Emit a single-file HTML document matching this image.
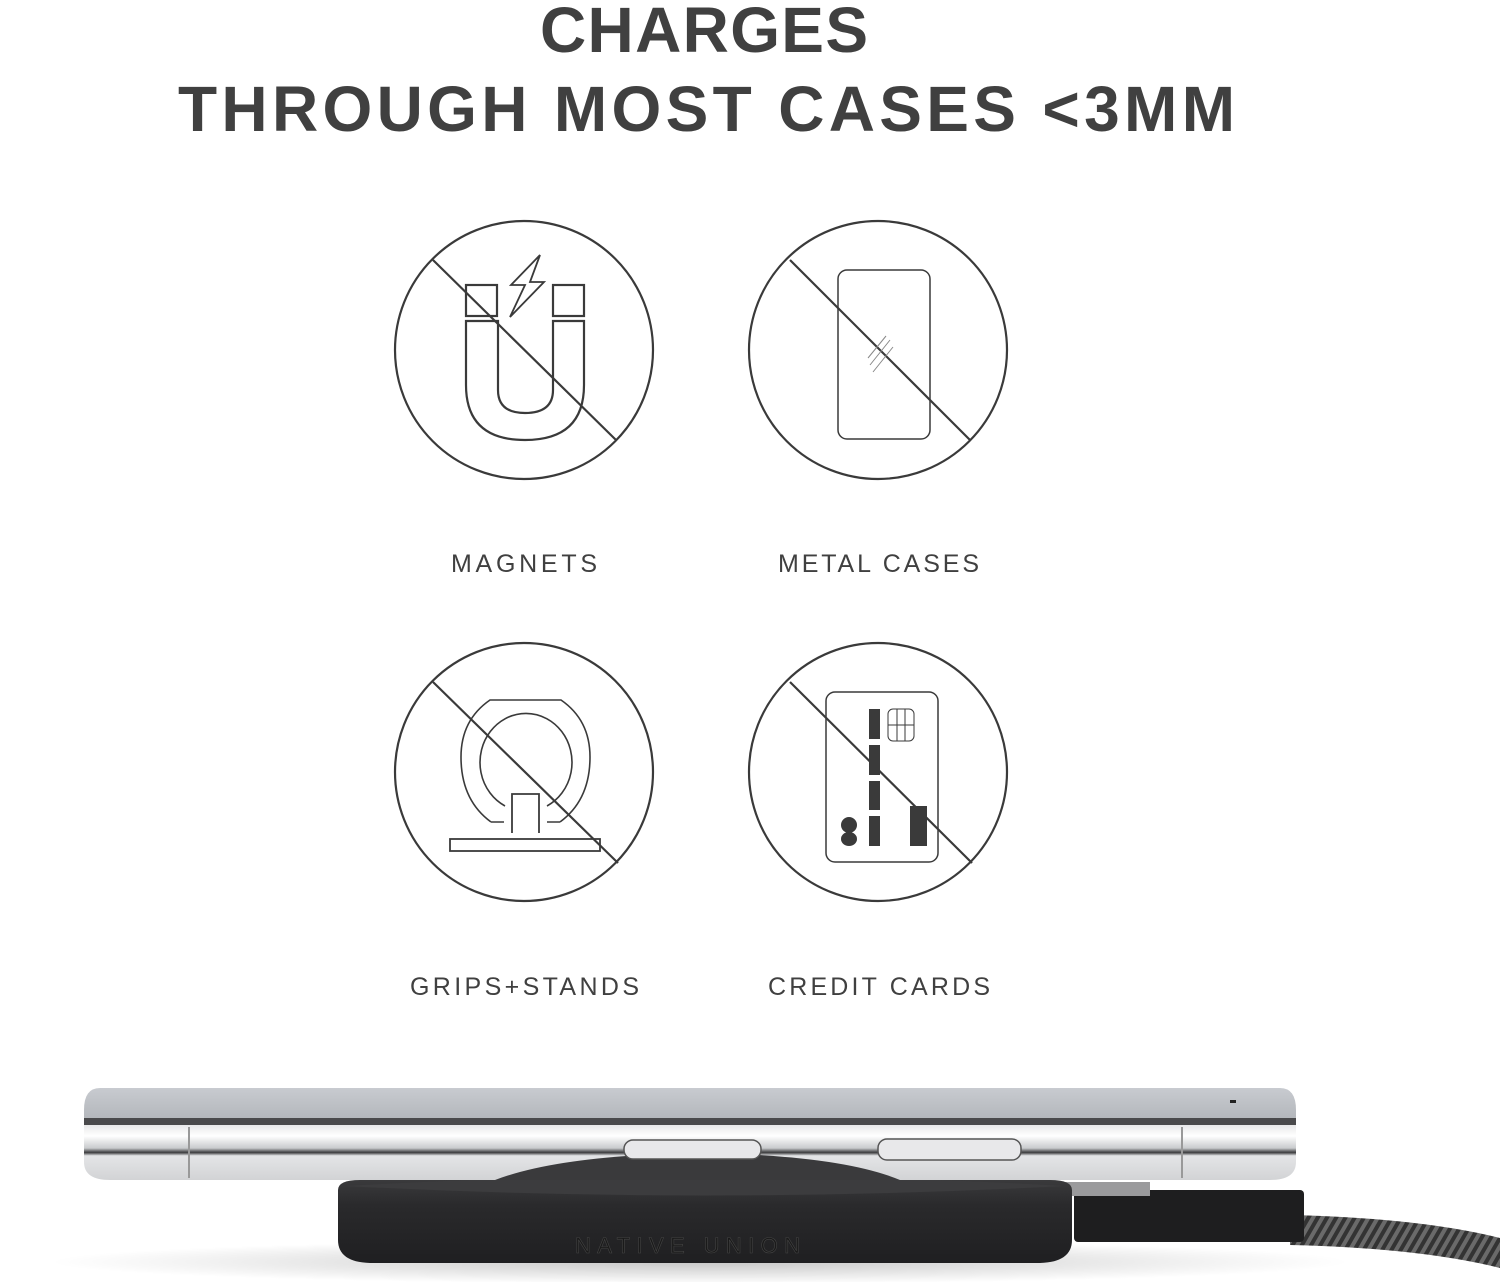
<!DOCTYPE html>
<html><head><meta charset="utf-8"><style>
html,body{margin:0;padding:0;background:#fff;width:1500px;height:1282px;overflow:hidden}
svg{display:block}
text{font-family:"Liberation Sans",sans-serif;fill:#404040}
</style></head><body>
<svg width="1500" height="1282" viewBox="0 0 1500 1282" xmlns="http://www.w3.org/2000/svg">
<defs>
<linearGradient id="chrome" x1="0" y1="0" x2="0" y2="1">
<stop offset="0" stop-color="#e8e8e9"/><stop offset="0.2" stop-color="#ffffff"/><stop offset="0.42" stop-color="#c9cbcd"/><stop offset="0.5" stop-color="#3a3a3c"/><stop offset="0.56" stop-color="#e4e5e7"/><stop offset="1" stop-color="#d2d3d5"/>
</linearGradient>
<linearGradient id="face" x1="0" y1="0" x2="0" y2="1">
<stop offset="0" stop-color="#c8cbd0"/><stop offset="1" stop-color="#b3b6bb"/>
</linearGradient>
<linearGradient id="puck" x1="0" y1="0" x2="0" y2="1">
<stop offset="0" stop-color="#3a3a3c"/><stop offset="0.3" stop-color="#2a2a2c"/><stop offset="1" stop-color="#1f1f21"/>
</linearGradient>
<radialGradient id="shadow" cx="0.5" cy="0.5" r="0.5">
<stop offset="0" stop-color="#000" stop-opacity="0.22"/><stop offset="1" stop-color="#000" stop-opacity="0"/>
</radialGradient>
<pattern id="braid" width="8" height="8" patternUnits="userSpaceOnUse" patternTransform="rotate(30)">
<rect width="8" height="8" fill="#333"/><rect width="4" height="8" fill="#6a6a6a"/>
</pattern>
</defs>

<!-- Title -->
<text x="540" y="52" font-size="64" font-weight="bold" textLength="328" lengthAdjust="spacing">CHARGES</text>
<text x="178" y="131" font-size="64" font-weight="bold" textLength="1057" lengthAdjust="spacing">THROUGH MOST CASES &lt;3MM</text>

<g fill="none" stroke="#3a3a3a" stroke-width="2.2">
<circle cx="524" cy="350" r="129"/>
<line x1="433" y1="260" x2="616" y2="440"/>
<rect x="466" y="285" width="31" height="31"/>
<rect x="553" y="285" width="31" height="31"/>
<path d="M466 321 V385 Q466 440 525 440 Q584 440 584 385 V321 H553 V390 Q553 413 525 413 Q498 413 498 390 V321 Z"/>
<path d="M540 255 L511 285 L525 285 L510 317 L544 282 L530 282 Z" stroke-width="1.8"/>

<circle cx="878" cy="350" r="129"/>
<line x1="790" y1="260" x2="970" y2="440"/>
<rect x="838" y="270" width="92" height="169" rx="9" stroke-width="1.5"/>
<path d="M870 365 L890 340 M873 372 L893 347 M868 358 L886 336" stroke-width="1" stroke="#888"/>

<circle cx="524" cy="772" r="129"/>
<line x1="433" y1="682" x2="618" y2="863"/>
<rect x="450" y="839" width="150" height="12" stroke-width="1.8"/>
<path d="M512 833 V794 H539 V833" stroke-width="1.8"/>
<path d="M505 806 A46 49 0 1 1 547 806" stroke-width="1.6"/>
<path d="M491 822 H504 M547 822 H560 M491 822 Q461 800 461 757 Q461 720 490 700 H561 Q590 720 590 757 Q590 800 560 822" stroke-width="1.6"/>

<circle cx="878" cy="772" r="129"/>
<line x1="790" y1="682" x2="972" y2="863"/>
<rect x="826" y="692" width="112" height="170" rx="9" stroke-width="1.5"/>
<rect x="888" y="709" width="26" height="32" rx="5" stroke-width="1"/>
<path d="M897 709 V741 M905 709 V741 M888 725 H914" stroke-width="1"/>
</g>
<g fill="#3a3a3a">
<rect x="869" y="709" width="11" height="30"/>
<rect x="869" y="745" width="11" height="30"/>
<rect x="869" y="781" width="11" height="29"/>
<rect x="869" y="816" width="11" height="30"/>
<rect x="910" y="806" width="17" height="40"/>
<ellipse cx="849" cy="825" rx="8" ry="8"/>
<ellipse cx="849" cy="839" rx="8" ry="7"/>
</g>

<g font-size="25">
<text x="451" y="572" textLength="146" lengthAdjust="spacing">MAGNETS</text>
<text x="778" y="572" textLength="201" lengthAdjust="spacing">METAL CASES</text>
<text x="410" y="995" textLength="229" lengthAdjust="spacing">GRIPS+STANDS</text>
<text x="768" y="995" textLength="222" lengthAdjust="spacing">CREDIT CARDS</text>
</g>

<ellipse cx="700" cy="1262" rx="650" ry="22" fill="url(#shadow)"/>
<path d="M1290 1215 Q1420 1218 1500 1238 V1268 Q1420 1248 1290 1245 Z" fill="url(#braid)"/>
<rect x="1074" y="1190" width="230" height="52" rx="4" fill="#1e1e1f"/>
<rect x="1060" y="1182" width="90" height="14" fill="#9a9a9c"/>
<path d="M338 1190 Q338 1180 360 1180 H1050 Q1072 1180 1072 1190 V1240 Q1072 1262 1040 1263 H370 Q338 1262 338 1240 Z" fill="url(#puck)"/>
<path d="M345 1186 Q705 1165 1065 1186 Q705 1205 345 1186 Z" fill="#3c3c3e"/>
<text x="575" y="1253" font-size="22" textLength="225" lengthAdjust="spacing" style="fill:#1a1a1a" stroke="#444" stroke-width="0.6">NATIVE UNION</text>
<path d="M100 1088 H1280 Q1296 1088 1296 1110 V1120 H84 V1110 Q84 1088 100 1088 Z" fill="url(#face)"/>
<rect x="84" y="1118" width="1212" height="7" fill="#4a4a4c"/>
<path d="M84 1125 H1296 V1162 Q1296 1180 1270 1180 H110 Q84 1180 84 1162 Z" fill="url(#chrome)"/>
<path d="M495 1180 Q560 1155 700 1153 Q840 1155 900 1180 Z" fill="#3a3a3c"/>
<line x1="189" y1="1127" x2="189" y2="1178" stroke="#999" stroke-width="2"/>
<line x1="1182" y1="1127" x2="1182" y2="1178" stroke="#999" stroke-width="2"/>
<rect x="624" y="1140" width="137" height="19" rx="9" fill="#e8e8ea" stroke="#555" stroke-width="1.5"/>
<rect x="878" y="1139" width="143" height="21" rx="9" fill="#e8e8ea" stroke="#555" stroke-width="1.5"/>
<rect x="1230" y="1100" width="6" height="3" fill="#222"/>
</svg>
</body></html>
